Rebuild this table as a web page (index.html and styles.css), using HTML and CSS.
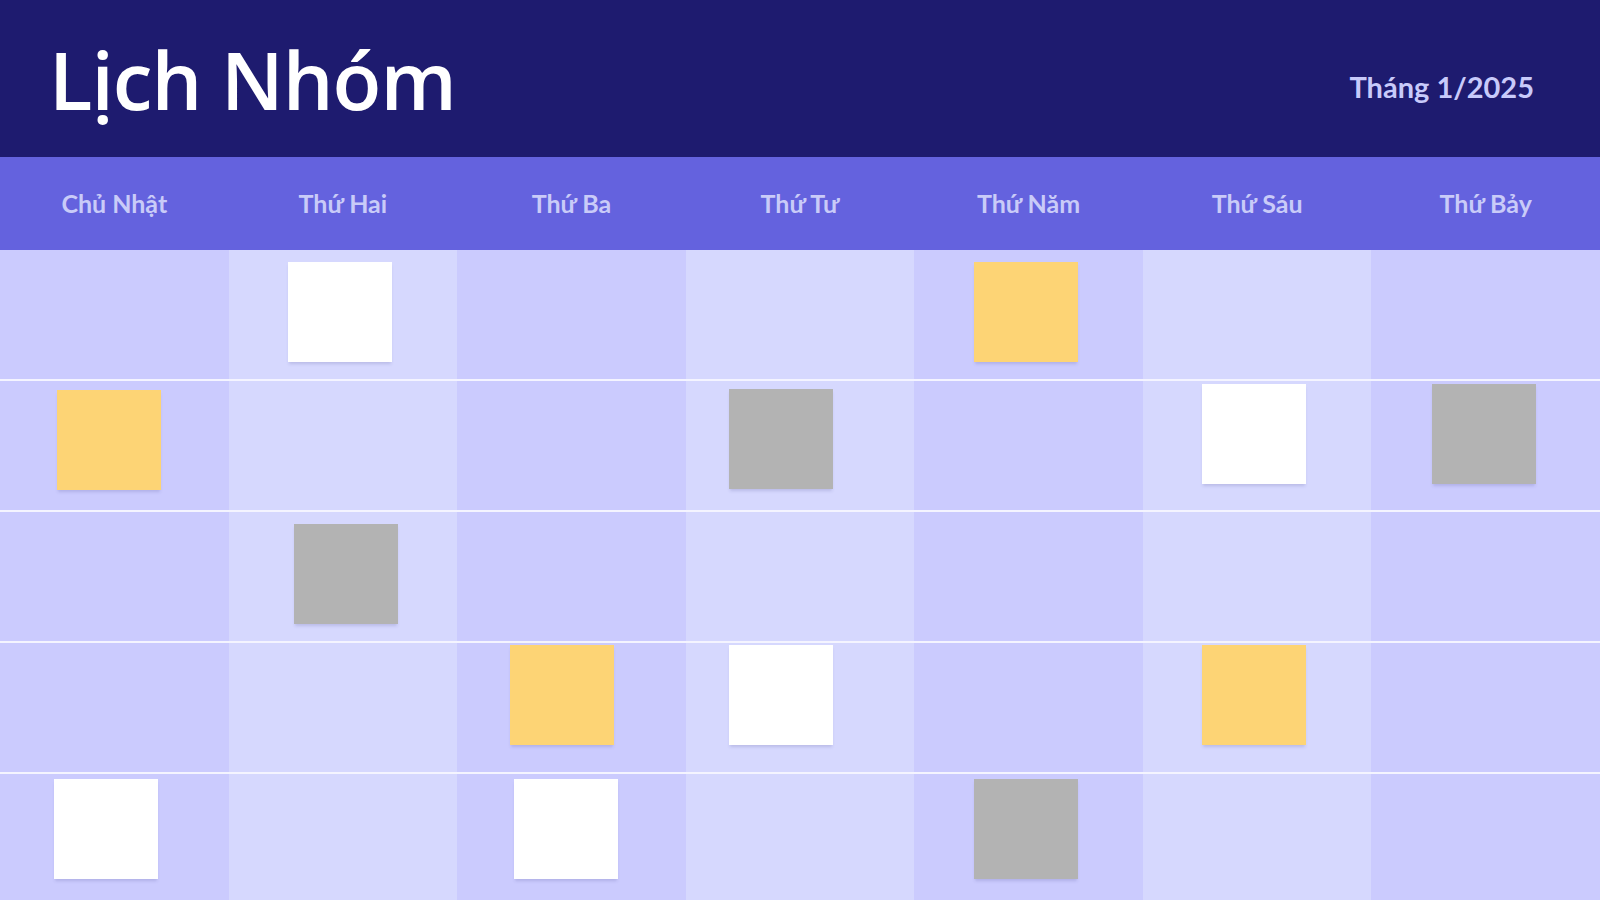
FILE: index.html
```html
<!DOCTYPE html>
<html lang="vi">
<head>
<meta charset="utf-8">
<title>Lịch Nhóm</title>
<link rel="stylesheet" href="styles.css">
</head>
<body>
<div class="page">
  <header class="top">
    <h1 class="title">Lịch Nhóm</h1>
    <div class="month">Tháng 1/2025</div>
  </header>
  <div class="days">
    <div class="day">Chủ Nhật</div>
    <div class="day">Thứ Hai</div>
    <div class="day">Thứ Ba</div>
    <div class="day">Thứ Tư</div>
    <div class="day">Thứ Năm</div>
    <div class="day">Thứ Sáu</div>
    <div class="day">Thứ Bảy</div>
  </div>
  <div class="weeks">
    <div class="week">
      <div class="cell"></div>
      <div class="cell"><div class="note white" style="--x:59px;--y:12px"></div></div>
      <div class="cell"></div>
      <div class="cell"></div>
      <div class="cell"><div class="note yellow" style="--x:60px;--y:12px"></div></div>
      <div class="cell"></div>
      <div class="cell"></div>
    </div>
    <div class="week">
      <div class="cell"><div class="note yellow" style="--x:57px;--y:9px"></div></div>
      <div class="cell"></div>
      <div class="cell"></div>
      <div class="cell"><div class="note gray" style="--x:43px;--y:8px"></div></div>
      <div class="cell"></div>
      <div class="cell"><div class="note white" style="--x:59px;--y:3px"></div></div>
      <div class="cell"><div class="note gray" style="--x:61px;--y:3px"></div></div>
    </div>
    <div class="week">
      <div class="cell"></div>
      <div class="cell"><div class="note gray" style="--x:65px;--y:12px"></div></div>
      <div class="cell"></div>
      <div class="cell"></div>
      <div class="cell"></div>
      <div class="cell"></div>
      <div class="cell"></div>
    </div>
    <div class="week">
      <div class="cell"></div>
      <div class="cell"></div>
      <div class="cell"><div class="note yellow" style="--x:53px;--y:2px"></div></div>
      <div class="cell"><div class="note white" style="--x:43px;--y:2px"></div></div>
      <div class="cell"></div>
      <div class="cell"><div class="note yellow" style="--x:59px;--y:2px"></div></div>
      <div class="cell"></div>
    </div>
    <div class="week">
      <div class="cell"><div class="note white" style="--x:54px;--y:5px"></div></div>
      <div class="cell"></div>
      <div class="cell"><div class="note white" style="--x:57px;--y:5px"></div></div>
      <div class="cell"></div>
      <div class="cell"><div class="note gray" style="--x:60px;--y:5px"></div></div>
      <div class="cell"></div>
      <div class="cell"></div>
    </div>
  </div>
</div>
</body>
</html>
```

FILE: styles.css
```css
* {
  box-sizing: border-box;
}

html, body {
  margin: 0;
  padding: 0;
  width: 1600px;
  height: 900px;
  overflow: hidden;
  background: #cbcbfe;
}

.page {
  width: 1600px;
  height: 900px;
  display: flex;
  flex-direction: column;
  overflow: hidden;
}

.top {
  height: 157px;
  flex: 0 0 157px;
  background: #1e1b6f;
  display: flex;
  align-items: center;
  justify-content: space-between;
  padding: 0 66px 0 49px;
}

.title {
  margin: 0;
  font-family: "Open Sans", "Noto Sans", sans-serif;
  font-weight: 600;
  font-size: 80px;
  line-height: 1;
  color: #ffffff;
  letter-spacing: -1px;
}

.month {
  font-family: "Lato", "Noto Sans", sans-serif;
  font-weight: 700;
  font-size: 29px;
  color: #c8cafa;
  padding-top: 16px;
}

.days {
  flex: 0 0 93px;
  height: 93px;
  background: #6462de;
  display: grid;
  grid-template-columns: repeat(7, 1fr);
  align-items: center;
}

.day {
  text-align: center;
  font-family: "Lato", "Noto Sans", sans-serif;
  font-weight: 700;
  font-size: 25px;
  color: #c9cbf8;
  padding-bottom: 2px;
}

.weeks {
  flex: 1 1 auto;
  display: flex;
  flex-direction: column;
}

.week {
  flex: 0 0 131px;
  height: 131px;
  display: grid;
  grid-template-columns: repeat(7, 1fr);
  border-bottom: 2px solid #f4f4ff;
}

.cell {
  background: #cbcbfe;
}

.cell:nth-child(even) {
  background: #d6d8fe;
}

.note {
  width: 104px;
  height: 100px;
  margin-left: var(--x);
  margin-top: var(--y);
  box-shadow: 0 3px 3px -1px rgba(60, 60, 130, 0.18);
}

.note.white {
  background: #ffffff;
}

.note.yellow {
  background: #fdd475;
}

.note.gray {
  background: #b3b3b3;
}
```
